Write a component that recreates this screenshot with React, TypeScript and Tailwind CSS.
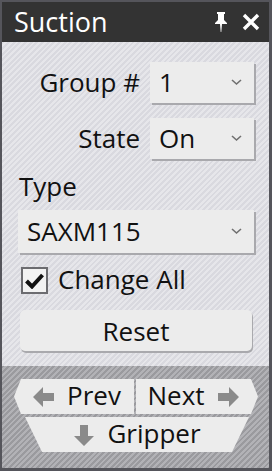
import { useState } from 'react';

const light = 'bg-[repeating-linear-gradient(135deg,#d9d9df_0px,#d9d9df_2px,#e6e6ea_2px,#e6e6ea_4px)]';
const dark = 'bg-[repeating-linear-gradient(135deg,#9a9a9e_0px,#9a9a9e_2px,#b2b2b6_2px,#b2b2b6_4px)]';

function Chevron() {
  return (
    <svg width="11" height="7" viewBox="0 0 11 7" className="shrink-0">
      <path d="M1 1 L5.5 5 L10 1" fill="none" stroke="#707070" strokeWidth="1.6" />
    </svg>
  );
}

function Select({ value, className }: { value: string; className: string }) {
  return (
    <div className={`flex items-center justify-between bg-[#ececec] shadow-[2px_2px_0_#a9a9ad] pl-[9px] pr-[12px] ${className}`}>
      <span className="leading-none -mt-[1px]">{value}</span>
      <Chevron />
    </div>
  );
}

function Arrow({ dir }: { dir: 'left' | 'right' | 'down' }) {
  const rot = dir === 'left' ? 0 : dir === 'right' ? 180 : 270;
  return (
    <svg width="22" height="20" viewBox="0 0 22 20" style={{ transform: `rotate(${rot}deg)` }} className="shrink-0">
      <polygon points="0,10 10,0 10,6 21,6 21,14 10,14 10,20" fill="#8a8a8a" />
    </svg>
  );
}

export default function App() {
  const [all, setAll] = useState(true);
  return (
    <div className="w-[272px] h-[471px] bg-[#55555b] pt-[2px] pl-[2px] pr-[3px] pb-[3px] flex flex-col text-[26px] text-[#111] font-['Open_Sans',sans-serif]">
      {/* title bar */}
      <div className="h-[40px] bg-[#333333] flex items-center pl-[12px] pr-[9px] text-white shrink-0">
        <span className="flex-1 leading-none -mt-[2px] text-[27px]">Suction</span>
        <svg width="14" height="22" viewBox="0 0 14 22" className="mr-[14px]">
          <path d="M3 1 H11 V3 H10 V9 L13 12 V13 H8 L7.3 21 H6.7 L6 13 H1 V12 L4 9 V3 H3 Z" fill="white" />
        </svg>
        <svg width="18" height="18" viewBox="0 0 18 18">
          <path d="M2 2 L16 16 M16 2 L2 16" stroke="white" strokeWidth="3.4" />
        </svg>
      </div>

      {/* main fields */}
      <div className={`${light} h-[324px] flex flex-col pt-[20px] pl-[16px] pr-[15px]`}>
        <div className="flex items-center justify-end gap-[10px]">
          <span className="leading-none -mt-[1px]">Group #</span>
          <Select value="1" className="w-[104px] h-[41px]" />
        </div>
        <div className="flex items-center justify-end gap-[10px] mt-[15px]">
          <span className="leading-none -mt-[1px]">State</span>
          <Select value="On" className="w-[104px] h-[41px]" />
        </div>
        <span className="leading-none mt-[14px] ml-[1px]">Type</span>
        <Select value="SAXM115" className="w-[236px] h-[43px] mt-[11px]" />
        <label className="flex items-center mt-[14px] ml-[3px] gap-[10px] cursor-pointer" onClick={() => setAll(!all)}>
          <span className="w-[27px] h-[27px] border-2 border-[#6c6c70] bg-[#f2f2f2] flex items-center justify-center">
            {all && (
              <svg width="19" height="16" viewBox="0 0 19 16">
                <path d="M1.5 8 L7 13.5 L17.5 2" fill="none" stroke="#111" strokeWidth="4" />
              </svg>
            )}
          </span>
          <span className="leading-none -mt-[3px]">Change All</span>
        </label>
        <button className="mt-[16px] ml-[2px] w-[232px] h-[41px] rounded-[5px] bg-[#ececec] shadow-[1px_2px_0_#a9a9ad] leading-none text-[26px]">
          Reset
        </button>
      </div>

      {/* navigation */}
      <div className={`${dark} flex-1 flex flex-col items-center pt-[13px]`}>
        <div className="flex gap-[2px] ml-[1px]">
          <button className="w-[120px] h-[35px] bg-[#ececec] [clip-path:polygon(7px_0,100%_0,100%_100%,7px_100%,0_50%)] flex items-center justify-center gap-[12px] pl-[6px]">
            <Arrow dir="left" />
            <span className="leading-none -mt-[3px]">Prev</span>
          </button>
          <button className="w-[122px] h-[35px] bg-[#ececec] [clip-path:polygon(0_0,calc(100%-7px)_0,100%_50%,calc(100%-7px)_100%,0_100%)] flex items-center justify-center gap-[12px] pr-[8px]">
            <span className="leading-none -mt-[3px]">Next</span>
            <Arrow dir="right" />
          </button>
        </div>
        <button className="mt-[3px] ml-[3px] w-[224px] h-[35px] bg-[#ececec] [clip-path:polygon(0_0,100%_0,calc(100%-17px)_100%,17px_100%)] flex items-center justify-center gap-[12px]">
          <Arrow dir="down" />
          <span className="leading-none -mt-[3px]">Gripper</span>
        </button>
      </div>
    </div>
  );
}
